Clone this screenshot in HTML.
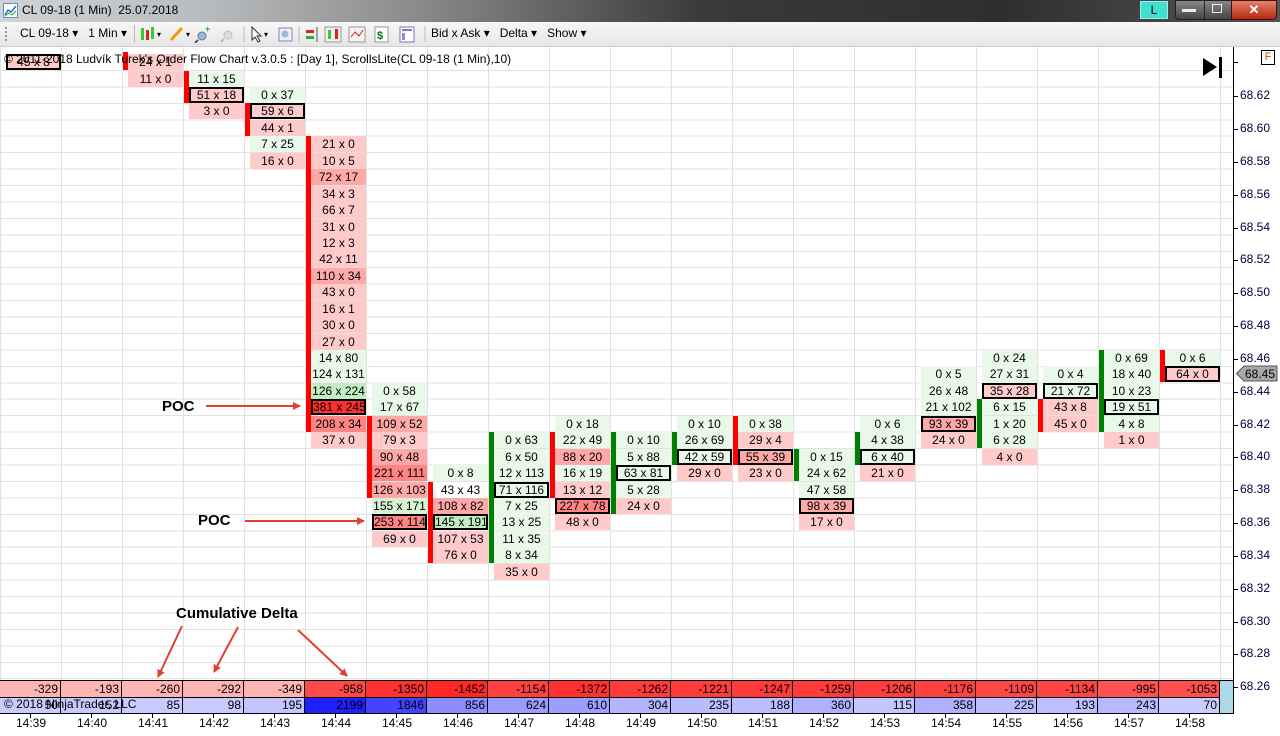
<!DOCTYPE html>
<html><head><meta charset="utf-8"><style>
*{margin:0;padding:0}
body{width:1280px;height:736px;position:relative;overflow:hidden;background:#fff;font-family:"Liberation Sans",sans-serif}
.a{position:absolute}
#title{left:0;top:0;width:1280px;height:22px;background:linear-gradient(90deg,#cfd3d6 0,#b9bcbf 200px,#8a8a8a 420px,#3a3a3a 700px,#2e2e2e 1000px,#555 1280px)}
#tb{left:0;top:22px;width:1280px;height:24px;background:linear-gradient(#f7f7f7,#e6e6e6);border-bottom:1px solid #cfcfcf;font-size:12px}
#chart{left:0;top:47px;width:1233px;height:666px;
background-image:linear-gradient(90deg,#e2e2e2 1px,transparent 1px),repeating-linear-gradient(180deg,transparent 0,transparent 15.44px,#e2e2e2 15.44px,#e2e2e2 16.44px);
background-size:61px 100%,100% 100%;background-position:0 0,0 7.5px}
.col{position:absolute;top:0;width:55px;height:736px}
.c{position:absolute;left:0;width:55px;height:16px;font-size:12px;line-height:16px;text-align:center;box-sizing:border-box;color:#000;white-space:nowrap}
.b{border:2px solid #000;line-height:12px}
.p1{background:#ffcaca}.p2{background:#ffa8a8}.p3{background:#ff8585}.r{background:#ff3030}
.g1{background:#e9f9e9}.g2{background:#d6f3d6}.g3{background:#c2edc2}.w{background:#fff}
.bar{position:absolute;width:5px}
.rb{background:#ff0000}.gb{background:#008000}
.d{position:absolute;height:16px;width:61px;box-sizing:border-box;border-right:1px solid #000;font-size:12px;line-height:16px;text-align:right;padding-right:2px;color:#000}
.tl{position:absolute;top:716px;font-size:12px;width:40px;text-align:center;color:#000}
.tk{position:absolute;top:713px;width:1px;height:5px;background:#000}
.pl{position:absolute;left:1240px;font-size:12px;color:#000040}
.pt{position:absolute;left:1233px;width:5px;height:1px;background:#000}
.poc{position:absolute;font-size:15px;font-weight:bold;color:#000}
</style></head><body>
<div class="a" id="title">
 <svg class="a" style="left:3px;top:3px" width="15" height="15"><rect x="0.5" y="0.5" width="14" height="14" fill="#fff" stroke="#6a8cb8"/><polyline points="2,12 5,7 8,9 13,3" fill="none" stroke="#2a6fd0" stroke-width="1.5"/><polyline points="2,13 6,10 9,12 13,8" fill="none" stroke="#3a3" stroke-width="1"/></svg>
 <div class="a" style="left:22px;top:3px;font-size:12px;color:#000">CL 09-18 (1 Min)&nbsp; 25.07.2018</div>
 <div class="a" style="left:1140px;top:1px;width:26px;height:16px;background:#40e0d0;border:1px solid #9ee;font-size:12px;text-align:center;line-height:16px">L</div>
 <div class="a" style="left:1175px;top:0;width:28px;height:18px;background:linear-gradient(#888,#444);border:1px solid #222;border-radius:0 0 0 4px"></div>
 <div class="a" style="left:1182px;top:9px;width:14px;height:3px;background:#eee"></div>
 <div class="a" style="left:1204px;top:0;width:26px;height:18px;background:linear-gradient(#888,#444);border:1px solid #222"></div>
 <div class="a" style="left:1212px;top:4px;width:8px;height:7px;border:1px solid #eee"></div>
 <div class="a" style="left:1231px;top:0;width:44px;height:18px;background:linear-gradient(#e8806a,#b52a10);border:1px solid #411;border-radius:0 0 4px 0;color:#fff;font-weight:bold;text-align:center;font-size:13px;line-height:17px">✕</div>
</div>
<div class="a" id="tb">
 <div class="a" style="left:5px;top:5px;width:2px;height:14px;border-left:2px dotted #999"></div>
 <div class="a" style="left:20px;top:4px">CL 09-18 &#9662;&nbsp;&nbsp; 1 Min &#9662;</div>
 <div class="a" style="left:134px;top:3px;width:1px;height:18px;background:#bbb"></div>
 <svg class="a" style="left:138px;top:3px" width="300" height="18">
  <rect x="3" y="3" width="3" height="12" fill="#3c3"/><rect x="8" y="5" width="3" height="10" fill="#d22"/><rect x="13" y="2" width="3" height="12" fill="#3c3"/><text x="19" y="12" font-size="8">▾</text>
  <line x1="33" y1="15" x2="44" y2="3" stroke="#e8a000" stroke-width="3"/><text x="48" y="12" font-size="8">▾</text>
  <circle cx="64" cy="11" r="4" fill="#9bd" stroke="#678"/><line x1="60" y1="15" x2="57" y2="18" stroke="#555" stroke-width="2"/><text x="67" y="7" font-size="9" fill="#3a3" font-weight="bold">+</text>
  <circle cx="90" cy="10" r="4" fill="#ddd" stroke="#bbb"/><line x1="86" y1="14" x2="83" y2="17" stroke="#bbb" stroke-width="2"/>
  <line x1="106" y1="1" x2="106" y2="17" stroke="#bbb"/>
  <path d="M114 2 L114 15 L117 12 L120 17 L122 16 L119 11 L123 11 Z" fill="#fff" stroke="#333"/><text x="126" y="12" font-size="8">▾</text>
  <rect x="141" y="3" width="13" height="13" fill="#eef" stroke="#889"/><circle cx="147" cy="9" r="3.5" fill="#9bd"/>
  <line x1="161" y1="1" x2="161" y2="17" stroke="#bbb"/>
  <rect x="168" y="5" width="8" height="3" fill="#d22"/><rect x="168" y="11" width="8" height="3" fill="#3a3"/><line x1="179" y1="2" x2="179" y2="17" stroke="#555"/>
  <rect x="187" y="2" width="16" height="15" fill="#eee" stroke="#999"/><rect x="190" y="5" width="3" height="9" fill="#3c3"/><rect x="197" y="4" width="3" height="10" fill="#d22"/>
  <rect x="211" y="2" width="16" height="15" fill="#f4f4f4" stroke="#999"/><polyline points="213,12 217,7 221,11 225,5" fill="none" stroke="#d22"/>
  <rect x="237" y="2" width="13" height="15" fill="#fff" stroke="#999"/><text x="239" y="14" font-size="11" fill="#070" font-weight="bold">$</text>
  <rect x="262" y="2" width="14" height="15" fill="#fff" stroke="#77a"/><rect x="264" y="4" width="10" height="2" fill="#77c"/><rect x="264" y="8" width="3" height="7" fill="#a7e"/>
  <line x1="287" y1="1" x2="287" y2="17" stroke="#bbb"/>
 </svg>
 <div class="a" style="left:431px;top:4px">Bid x Ask &#9662;&nbsp;&nbsp; Delta &#9662;&nbsp;&nbsp; Show &#9662;</div>
</div>

<div class="a" id="chart"></div>

<!-- bars -->
<div class="bar rb" style="left:123px;top:52px;height:18px"></div>
<div class="bar rb" style="left:184px;top:71px;height:32px"></div>
<div class="bar rb" style="left:245px;top:103px;height:33px"></div>
<div class="bar rb" style="left:306px;top:136px;height:296px"></div>
<div class="bar rb" style="left:367px;top:416px;height:82px"></div>
<div class="bar rb" style="left:428px;top:482px;height:81px"></div>
<div class="bar gb" style="left:489px;top:432px;height:131px"></div>
<div class="bar rb" style="left:550px;top:432px;height:66px"></div>
<div class="bar gb" style="left:611px;top:432px;height:82px"></div>
<div class="bar gb" style="left:672px;top:432px;height:33px"></div>
<div class="bar rb" style="left:733px;top:416px;height:49px"></div>
<div class="bar gb" style="left:794px;top:449px;height:32px"></div>
<div class="bar gb" style="left:855px;top:432px;height:33px"></div>
<div class="bar gb" style="left:977px;top:399px;height:49px"></div>
<div class="bar rb" style="left:1038px;top:399px;height:33px"></div>
<div class="bar gb" style="left:1099px;top:350px;height:82px"></div>
<div class="bar rb" style="left:1160px;top:350px;height:32px"></div>

<div class="col" style="left:6px"><div class="c p1 b" style="top:54px">45 x 8</div></div>
<div class="col" style="left:128px"><div class="c p1" style="top:54px">24 x 1</div><div class="c p1" style="top:71px">11 x 0</div></div>
<div class="col" style="left:189px"><div class="c g1" style="top:71px">11 x 15</div><div class="c p1 b" style="top:87px">51 x 18</div><div class="c p1" style="top:103px">3 x 0</div></div>
<div class="col" style="left:250px"><div class="c g1" style="top:87px">0 x 37</div><div class="c p1 b" style="top:103px">59 x 6</div><div class="c p1" style="top:120px">44 x 1</div><div class="c g1" style="top:136px">7 x 25</div><div class="c p1" style="top:153px">16 x 0</div></div>
<div class="col" style="left:311px">
<div class="c p1" style="top:136px">21 x 0</div><div class="c p1" style="top:153px">10 x 5</div><div class="c p2" style="top:169px">72 x 17</div><div class="c p1" style="top:186px">34 x 3</div><div class="c p1" style="top:202px">66 x 7</div><div class="c p1" style="top:219px">31 x 0</div><div class="c p1" style="top:235px">12 x 3</div><div class="c p1" style="top:251px">42 x 11</div><div class="c p2" style="top:268px">110 x 34</div><div class="c p1" style="top:284px">43 x 0</div><div class="c p1" style="top:301px">16 x 1</div><div class="c p1" style="top:317px">30 x 0</div><div class="c p1" style="top:334px">27 x 0</div><div class="c g1" style="top:350px">14 x 80</div><div class="c g1" style="top:366px">124 x 131</div><div class="c g3" style="top:383px">126 x 224</div><div class="c r b" style="top:399px">381 x 245</div><div class="c p3" style="top:416px">208 x 34</div><div class="c p1" style="top:432px">37 x 0</div></div>
<div class="col" style="left:372px">
<div class="c g1" style="top:383px">0 x 58</div><div class="c g1" style="top:399px">17 x 67</div><div class="c p2" style="top:416px">109 x 52</div><div class="c p1" style="top:432px">79 x 3</div><div class="c p2" style="top:449px">90 x 48</div><div class="c p3" style="top:465px">221 x 111</div><div class="c p2" style="top:482px">126 x 103</div><div class="c g2" style="top:498px">155 x 171</div><div class="c p3 b" style="top:514px">253 x 114</div><div class="c p1" style="top:531px">69 x 0</div></div>
<div class="col" style="left:433px">
<div class="c g1" style="top:465px">0 x 8</div><div class="c w" style="top:482px">43 x 43</div><div class="c p2" style="top:498px">108 x 82</div><div class="c g3 b" style="top:514px">145 x 191</div><div class="c p1" style="top:531px">107 x 53</div><div class="c p1" style="top:547px">76 x 0</div></div>
<div class="col" style="left:494px">
<div class="c g1" style="top:432px">0 x 63</div><div class="c g1" style="top:449px">6 x 50</div><div class="c g1" style="top:465px">12 x 113</div><div class="c g1 b" style="top:482px">71 x 116</div><div class="c g1" style="top:498px">7 x 25</div><div class="c g1" style="top:514px">13 x 25</div><div class="c g1" style="top:531px">11 x 35</div><div class="c g1" style="top:547px">8 x 34</div><div class="c p1" style="top:564px">35 x 0</div></div>
<div class="col" style="left:555px">
<div class="c g1" style="top:416px">0 x 18</div><div class="c g1" style="top:432px">22 x 49</div><div class="c p2" style="top:449px">88 x 20</div><div class="c g1" style="top:465px">16 x 19</div><div class="c p1" style="top:482px">13 x 12</div><div class="c p3 b" style="top:498px">227 x 78</div><div class="c p1" style="top:514px">48 x 0</div></div>
<div class="col" style="left:616px">
<div class="c g1" style="top:432px">0 x 10</div><div class="c g1" style="top:449px">5 x 88</div><div class="c g1 b" style="top:465px">63 x 81</div><div class="c g1" style="top:482px">5 x 28</div><div class="c p1" style="top:498px">24 x 0</div></div>
<div class="col" style="left:677px">
<div class="c g1" style="top:416px">0 x 10</div><div class="c g1" style="top:432px">26 x 69</div><div class="c g1 b" style="top:449px">42 x 59</div><div class="c p1" style="top:465px">29 x 0</div></div>
<div class="col" style="left:738px">
<div class="c g1" style="top:416px">0 x 38</div><div class="c p1" style="top:432px">29 x 4</div><div class="c p2 b" style="top:449px">55 x 39</div><div class="c p1" style="top:465px">23 x 0</div></div>
<div class="col" style="left:799px">
<div class="c g1" style="top:449px">0 x 15</div><div class="c g1" style="top:465px">24 x 62</div><div class="c g1" style="top:482px">47 x 58</div><div class="c p2 b" style="top:498px">98 x 39</div><div class="c p1" style="top:514px">17 x 0</div></div>
<div class="col" style="left:860px">
<div class="c g1" style="top:416px">0 x 6</div><div class="c g1" style="top:432px">4 x 38</div><div class="c g1 b" style="top:449px">6 x 40</div><div class="c p1" style="top:465px">21 x 0</div></div>
<div class="col" style="left:921px">
<div class="c g1" style="top:366px">0 x 5</div><div class="c g1" style="top:383px">26 x 48</div><div class="c g1" style="top:399px">21 x 102</div><div class="c p2 b" style="top:416px">93 x 39</div><div class="c p1" style="top:432px">24 x 0</div></div>
<div class="col" style="left:982px">
<div class="c g1" style="top:350px">0 x 24</div><div class="c g1" style="top:366px">27 x 31</div><div class="c p1 b" style="top:383px">35 x 28</div><div class="c g1" style="top:399px">6 x 15</div><div class="c g1" style="top:416px">1 x 20</div><div class="c g1" style="top:432px">6 x 28</div><div class="c p1" style="top:449px">4 x 0</div></div>
<div class="col" style="left:1043px">
<div class="c g1" style="top:366px">0 x 4</div><div class="c g1 b" style="top:383px">21 x 72</div><div class="c p1" style="top:399px">43 x 8</div><div class="c p1" style="top:416px">45 x 0</div></div>
<div class="col" style="left:1104px">
<div class="c g1" style="top:350px">0 x 69</div><div class="c g1" style="top:366px">18 x 40</div><div class="c g1" style="top:383px">10 x 23</div><div class="c g1 b" style="top:399px">19 x 51</div><div class="c g1" style="top:416px">4 x 8</div><div class="c p1" style="top:432px">1 x 0</div></div>
<div class="col" style="left:1165px">
<div class="c g1" style="top:350px">0 x 6</div><div class="c p1 b" style="top:366px">64 x 0</div></div>

<div class="a" style="left:4px;top:52px;font-size:12px;color:#000;white-space:nowrap">© 2011-2018 Ludvík Turek's Order Flow Chart v.3.0.5 : [Day 1], ScrollsLite(CL 09-18 (1 Min),10)</div>

<svg class="a" style="left:1202px;top:57px" width="22" height="22"><path d="M1 1 L15 10 L1 19 Z" fill="#000"/><rect x="17" y="0" width="3" height="21" fill="#000"/></svg>

<div class="a" style="left:0;top:680px;width:1233px;height:34px;border-top:1px solid #000;border-bottom:1px solid #000;box-sizing:border-box;background:#add8e6"></div>
<div class="a" style="left:0;top:681px;width:1220px;height:16px">
<div class="d" style="left:0;background:#ffb4b4">-329</div><div class="d" style="left:61px;background:#ffb4b4">-193</div><div class="d" style="left:122px;background:#ffb4b4">-260</div><div class="d" style="left:183px;background:#ffb4b4">-292</div><div class="d" style="left:244px;background:#ffb4b4">-349</div><div class="d" style="left:305px;background:#ff4848">-958</div><div class="d" style="left:366px;background:#ff3030">-1350</div><div class="d" style="left:427px;background:#ff2626">-1452</div><div class="d" style="left:488px;background:#ff4040">-1154</div><div class="d" style="left:549px;background:#ff3030">-1372</div><div class="d" style="left:610px;background:#ff3a3a">-1262</div><div class="d" style="left:671px;background:#ff3c3c">-1221</div><div class="d" style="left:732px;background:#ff3a3a">-1247</div><div class="d" style="left:793px;background:#ff3a3a">-1259</div><div class="d" style="left:854px;background:#ff3d3d">-1206</div><div class="d" style="left:915px;background:#ff4040">-1176</div><div class="d" style="left:976px;background:#ff4646">-1109</div><div class="d" style="left:1037px;background:#ff4444">-1134</div><div class="d" style="left:1098px;background:#ff5252">-995</div><div class="d" style="left:1159px;background:#ff4e4e">-1053</div></div>
<div class="a" style="left:0;top:697px;width:1220px;height:16px;border-top:1px solid #000;box-sizing:border-box">
<div class="d" style="left:0;background:#cacaff;height:15px;line-height:15px">50</div><div class="d" style="left:61px;background:#c8c8ff;height:15px;line-height:15px">152</div><div class="d" style="left:122px;background:#cacaff;height:15px;line-height:15px">85</div><div class="d" style="left:183px;background:#cacaff;height:15px;line-height:15px">98</div><div class="d" style="left:244px;background:#c4c4ff;height:15px;line-height:15px">195</div><div class="d" style="left:305px;background:#2020ff;height:15px;line-height:15px">2199</div><div class="d" style="left:366px;background:#4444ff;height:15px;line-height:15px">1846</div><div class="d" style="left:427px;background:#8c8cff;height:15px;line-height:15px">856</div><div class="d" style="left:488px;background:#9c9cff;height:15px;line-height:15px">624</div><div class="d" style="left:549px;background:#9e9eff;height:15px;line-height:15px">610</div><div class="d" style="left:610px;background:#b4b4ff;height:15px;line-height:15px">304</div><div class="d" style="left:671px;background:#babaff;height:15px;line-height:15px">235</div><div class="d" style="left:732px;background:#bcbcff;height:15px;line-height:15px">188</div><div class="d" style="left:793px;background:#b0b0ff;height:15px;line-height:15px">360</div><div class="d" style="left:854px;background:#c6c6ff;height:15px;line-height:15px">115</div><div class="d" style="left:915px;background:#b0b0ff;height:15px;line-height:15px">358</div><div class="d" style="left:976px;background:#bbbbff;height:15px;line-height:15px">225</div><div class="d" style="left:1037px;background:#bdbdff;height:15px;line-height:15px">193</div><div class="d" style="left:1098px;background:#b8b8ff;height:15px;line-height:15px">243</div><div class="d" style="left:1159px;background:#cccbff;height:15px;line-height:15px">70</div></div>
<div class="a" style="left:4px;top:697px;font-size:12px;line-height:15px;color:#000">© 2018 NinjaTrader, LLC</div>

<div class="a" style="left:1233px;top:47px;width:1px;height:667px;background:#000"></div>
<div class="a" style="left:1261px;top:50px;width:12px;height:13px;border:1px solid #000;font-size:11px;line-height:13px;text-align:center;color:#c06000">F</div>
<div class="pt" style="top:62px"></div>
<div class="pt" style="top:96px"></div><div class="pl" style="top:88px">68.62</div>
<div class="pt" style="top:129px"></div><div class="pl" style="top:121px">68.60</div>
<div class="pt" style="top:162px"></div><div class="pl" style="top:154px">68.58</div>
<div class="pt" style="top:195px"></div><div class="pl" style="top:187px">68.56</div>
<div class="pt" style="top:228px"></div><div class="pl" style="top:220px">68.54</div>
<div class="pt" style="top:260px"></div><div class="pl" style="top:252px">68.52</div>
<div class="pt" style="top:293px"></div><div class="pl" style="top:285px">68.50</div>
<div class="pt" style="top:326px"></div><div class="pl" style="top:318px">68.48</div>
<div class="pt" style="top:359px"></div><div class="pl" style="top:351px">68.46</div>
<div class="pt" style="top:392px"></div><div class="pl" style="top:384px">68.44</div>
<div class="pt" style="top:425px"></div><div class="pl" style="top:417px">68.42</div>
<div class="pt" style="top:457px"></div><div class="pl" style="top:449px">68.40</div>
<div class="pt" style="top:490px"></div><div class="pl" style="top:482px">68.38</div>
<div class="pt" style="top:523px"></div><div class="pl" style="top:515px">68.36</div>
<div class="pt" style="top:556px"></div><div class="pl" style="top:548px">68.34</div>
<div class="pt" style="top:589px"></div><div class="pl" style="top:581px">68.32</div>
<div class="pt" style="top:622px"></div><div class="pl" style="top:614px">68.30</div>
<div class="pt" style="top:654px"></div><div class="pl" style="top:646px">68.28</div>
<div class="pt" style="top:687px"></div><div class="pl" style="top:679px">68.26</div>
<svg class="a" style="left:1236px;top:365px" width="42" height="17"><path d="M0.5 8.5 L8 1 L41 1 L41 16 L8 16 Z" fill="#a8a8a8" stroke="#555"/><text x="9" y="13" font-size="12" font-family="Liberation Sans" fill="#000">68.45</text></svg>

<div class="tk" style="left:30px"></div><div class="tl" style="left:11px">14:39</div>
<div class="tk" style="left:91px"></div><div class="tl" style="left:72px">14:40</div>
<div class="tk" style="left:152px"></div><div class="tl" style="left:133px">14:41</div>
<div class="tk" style="left:213px"></div><div class="tl" style="left:194px">14:42</div>
<div class="tk" style="left:274px"></div><div class="tl" style="left:255px">14:43</div>
<div class="tk" style="left:335px"></div><div class="tl" style="left:316px">14:44</div>
<div class="tk" style="left:396px"></div><div class="tl" style="left:377px">14:45</div>
<div class="tk" style="left:457px"></div><div class="tl" style="left:438px">14:46</div>
<div class="tk" style="left:518px"></div><div class="tl" style="left:499px">14:47</div>
<div class="tk" style="left:579px"></div><div class="tl" style="left:560px">14:48</div>
<div class="tk" style="left:640px"></div><div class="tl" style="left:621px">14:49</div>
<div class="tk" style="left:701px"></div><div class="tl" style="left:682px">14:50</div>
<div class="tk" style="left:762px"></div><div class="tl" style="left:743px">14:51</div>
<div class="tk" style="left:823px"></div><div class="tl" style="left:804px">14:52</div>
<div class="tk" style="left:884px"></div><div class="tl" style="left:865px">14:53</div>
<div class="tk" style="left:945px"></div><div class="tl" style="left:926px">14:54</div>
<div class="tk" style="left:1006px"></div><div class="tl" style="left:987px">14:55</div>
<div class="tk" style="left:1067px"></div><div class="tl" style="left:1048px">14:56</div>
<div class="tk" style="left:1128px"></div><div class="tl" style="left:1109px">14:57</div>
<div class="tk" style="left:1189px"></div><div class="tl" style="left:1170px">14:58</div>

<div class="poc" style="left:162px;top:398px">POC</div>
<div class="poc" style="left:198px;top:512px">POC</div>
<div class="poc" style="left:176px;top:605px">Cumulative Delta</div>
<svg class="a" style="left:0;top:0" width="1280" height="736">
 <defs><marker id="ah" markerWidth="8" markerHeight="8" refX="7" refY="4" orient="auto" markerUnits="userSpaceOnUse"><path d="M0 0 L8 4 L0 8 Z" fill="#e04030"/></marker></defs>
 <g stroke="#e04030" stroke-width="2" fill="none" marker-end="url(#ah)">
  <line x1="206" y1="406" x2="300" y2="406"/>
  <line x1="245" y1="521" x2="364" y2="521"/>
  <line x1="182" y1="626" x2="158" y2="677"/>
  <line x1="238" y1="627" x2="214" y2="672"/>
  <line x1="298" y1="630" x2="347" y2="676"/>
 </g>
</svg>
</body></html>
